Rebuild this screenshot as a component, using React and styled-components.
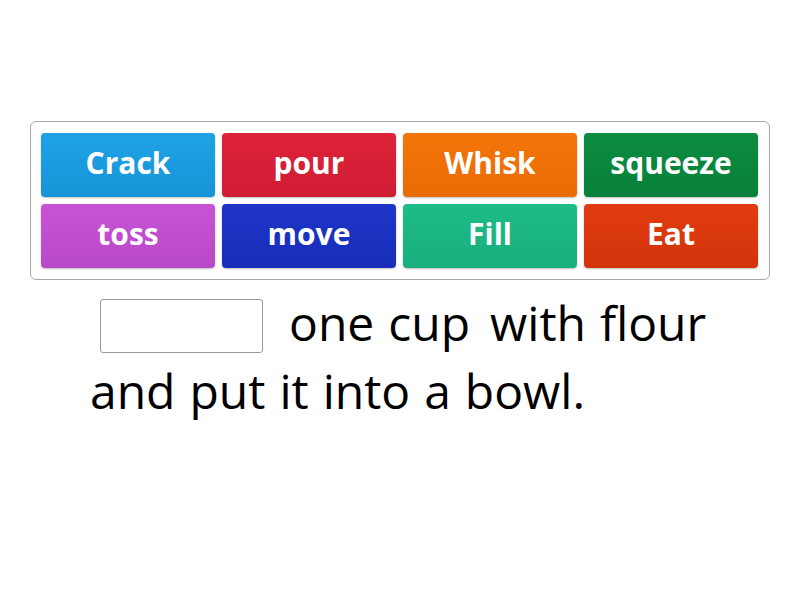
import React from 'react';
import styled, { createGlobalStyle } from 'styled-components';

const GlobalStyle = createGlobalStyle`
    body {
        margin: 0;
        background: #ffffff;
        font-family: 'Open Sans', 'Noto Sans', sans-serif;
    }
`
const Page = styled.div`
    width: 800px;
    height: 600px;
    padding-top: 121px;
    box-sizing: border-box;
`
const Bank = styled.div`
    margin-left: 30px;
    width: 740px;
    height: 159px;
    box-sizing: border-box;
    border: 1px solid #a8a8a8;
    border-radius: 6px;
    padding: 11px 10px 10px 10px;
    display: grid;
    grid-template-columns: repeat(4, 174px);
    grid-auto-rows: 64px;
    column-gap: 7px;
    row-gap: 7px;
`
const Tile = styled.div`
    background: linear-gradient(to bottom, ${({ color }) => color}, ${({ shade }) => shade});
    border-radius: 4px;
    box-shadow: 0 1px 2px rgba(0, 0, 0, 0.25);
    display: flex;
    align-items: center;
    justify-content: center;
    padding-bottom: 6px;
    box-sizing: border-box;
    color: #ffffff;
    font-family: 'Open Sans', sans-serif;
    font-weight: 700;
    font-size: 30px;
`
const Sentence = styled.div`
    margin: 9px 0 0 90px;
    width: 640px;
    display: flex;
    flex-wrap: wrap;
    align-items: center;
    column-gap: 14px;
    font-family: 'Open Sans', sans-serif;
    font-size: 48px;
    line-height: 68px;
    color: #000000;
`
const Blank = styled.div`
    width: 163px;
    height: 54px;
    box-sizing: border-box;
    border: 1px solid #9a9a9a;
    border-radius: 3px;
    background: #ffffff;
    margin: 6px 12px 0 10px;
`
const Word = styled.span`
    margin-left: ${({ shift }) => shift || 0}px;
`

const tiles = [
    { text: 'Crack', color: '#1fa3e6', shade: '#1794d8' },
    { text: 'pour', color: '#dd2239', shade: '#d01d33' },
    { text: 'Whisk', color: '#f47508', shade: '#e86b05' },
    { text: 'squeeze', color: '#0b8c40', shade: '#08803a' },
    { text: 'toss', color: '#c852d6', shade: '#b949c7' },
    { text: 'move', color: '#1e35c8', shade: '#182db8' },
    { text: 'Fill', color: '#1dbc88', shade: '#19ae7d' },
    { text: 'Eat', color: '#e03c10', shade: '#d4340b' },
]

const words = [
    { text: 'one' },
    { text: 'cup' },
    { text: 'with', shift: 6 },
    { text: 'flour' },
    { text: 'and' },
    { text: 'put' },
    { text: 'it' },
    { text: 'into' },
    { text: 'a' },
    { text: 'bowl.' },
]

function App() {
    return (
        <>
            <GlobalStyle />
            <Page>
                <Bank>
                    {tiles.map((tile) => (
                        <Tile key={tile.text} color={tile.color} shade={tile.shade}>
                            {tile.text}
                        </Tile>
                    ))}
                </Bank>
                <Sentence>
                    <Blank />
                    {words.map((word, index) => (
                        <Word key={index} shift={word.shift}>{word.text}</Word>
                    ))}
                </Sentence>
            </Page>
        </>
    )
}

export default App;
